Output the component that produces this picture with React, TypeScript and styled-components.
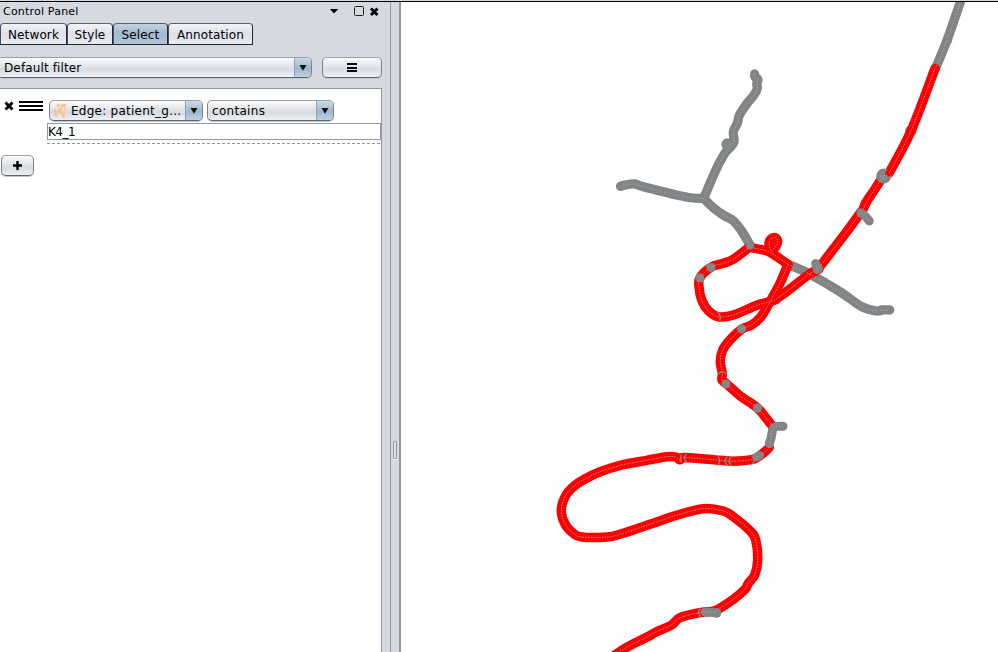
import React from 'react';
import styled, { createGlobalStyle, css } from 'styled-components';

const Global = createGlobalStyle`
  * { box-sizing: border-box; }
  html, body { margin: 0; padding: 0; overflow: hidden; background: #fff; }
  body { font-family: "DejaVu Sans", sans-serif; font-size: 12px; color: #000; }
`;

const Page = styled.div`
  width: 998px;
  height: 652px;
  display: flex;
  flex-direction: column;
  overflow: hidden;
`;
const TopEdge = styled.div`
  height: 2px;
  flex: none;
  background: #d6d9df;
  border-bottom: 1px solid #000;
`;
const Workspace = styled.div`
  flex: 1;
  min-height: 0;
  display: flex;
`;
const Panel = styled.section`
  width: 390px;
  flex: none;
  display: flex;
  flex-direction: column;
  background: #d6d9df;
`;
const TitleBar = styled.header`
  height: 21px;
  flex: none;
  display: flex;
  align-items: center;
  justify-content: space-between;
  padding: 0 11px 3px 3px;
  font-size: 11px;
  letter-spacing: 0.2px;
`;
const WindowIcons = styled.svg`
  display: block;
`;
const Tabs = styled.nav`
  height: 22px;
  flex: none;
  display: flex;
`;
const Tab = styled.button<{ $w: number; $active?: boolean }>`
  width: ${p => p.$w}px;
  height: 22px;
  padding: 1px 0 0;
  border: 1px solid #252638;
  border-top-color: #5d5f6a;
  border-left-color: ${p => (p.$active ? '#3d526b' : '#4a4c5a')};
  border-radius: 4px 4px 0 0;
  background: ${p =>
    p.$active
      ? 'linear-gradient(#c3d2e0, #a3b8cb 50%, #b0c8dc)'
      : 'linear-gradient(#f2f3f5, #dfe1e6 50%, #e9ebef)'};
  font: 12px "DejaVu Sans", sans-serif;
  letter-spacing: 0.13px;
  color: #000;
`;
const nimbus = css`
  border: 1px solid #7d828c;
  border-top-color: #9b9fa8;
  border-bottom-color: #5c6470;
  background: linear-gradient(#fbfbfc, #e4e6ea 40%, #d7dae0 60%, #eef0f4);
  box-shadow: 0 1px 0 #c2c5cb;
`;
const FilterRow = styled.div`
  display: flex;
  height: 21px;
  margin-top: 12px;
  gap: 10px;
`;
const Combo = styled.div<{ $w: number; $flush?: boolean }>`
  ${nimbus}
  width: ${p => p.$w}px;
  height: 21px;
  flex: none;
  display: flex;
  align-items: center;
  overflow: hidden;
  border-radius: ${p => (p.$flush ? '2px 5px 5px 2px' : '5px')};
  border-left-width: ${p => (p.$flush ? 0 : 1)}px;
  padding-left: ${p => (p.$flush ? 4 : 3)}px;
`;
const ComboText = styled.span<{ $gap?: number; $spacing?: number }>`
  flex: 1;
  white-space: nowrap;
  line-height: 20px;
  padding-left: ${p => p.$gap ?? 0}px;
  letter-spacing: ${p => p.$spacing ?? 0.13}px;
`;
const Arrow = styled.span`
  width: 17px;
  height: 21px;
  flex: none;
  display: grid;
  place-items: center;
  border-left: 1px solid #8ba1b6;
  background: linear-gradient(#d0dde9, #9fb8cd 55%, #bed4e7);
`;
const Button = styled.button<{ $w: number }>`
  ${nimbus}
  width: ${p => p.$w}px;
  height: 21px;
  padding: 0;
  border-radius: 5px;
  display: grid;
  place-items: center;
`;
const FilterArea = styled.div`
  width: 382px;
  flex: 1;
  margin-top: 10px;
  border: 1px solid #9297a1;
  border-width: 1px 1px 0 0;
  background: #fff;
`;
const Condition = styled.div`
  display: flex;
  height: 34px;
  padding: 11px 0 0 3px;
`;
const Handles = styled.svg`
  width: 40px;
  height: 16px;
  margin: 0 6px 0 0;
  flex: none;
`;
const Combos = styled.div`
  display: flex;
  gap: 4px;
`;
const Value = styled.div`
  margin-left: 47px;
  height: 17px;
  border: 1px solid #9297a1;
  font-size: 12px;
  line-height: 16px;
  letter-spacing: -0.5px;
`;
const Divider = styled.div`
  margin: 3px 0 11px 47px;
  height: 1px;
  background: repeating-linear-gradient(90deg, #8f949f 0 3px, #fff 3px 5px);
`;
const AddRow = styled.div`
  padding-left: 1px;
`;
const Splitter = styled.div`
  width: 11px;
  flex: none;
  display: flex;
  align-items: flex-start;
  border-left: 1px solid #9297a1;
  border-right: 2px solid #9297a1;
  background: #d6d9df;
`;
const Grip = styled.div`
  width: 4px;
  height: 18px;
  margin: 439px 0 0 2px;
  border: 1px solid #9499a5;
  border-radius: 1px;
  background: #dfe1e6;
  box-shadow: 0 1px 0 #f5f6f8;
`;
const Graph = styled.svg`
  width: 597px;
  height: 650px;
  flex: none;
  display: block;
  background: #fff;
`;

const DownTriangle = () => (
  <svg width="8" height="6" viewBox="0 0 8 6">
    <path d="M.5 0h7L4 5.8z" fill="#111" />
  </svg>
);

const NetworkGlyph = () => (
  <svg width="15" height="16" viewBox="0 0 15 16" fill="#fdc38a" stroke="#fdc38a">
    <path d="M2.5 8 6.5 7.5 10.5 2.5M5.5 2.5l5 0M6.5 7.5l5 3.5M6.5 7.5 10.5 13.5M6.5 7.5l-4.5 4" fill="none" strokeWidth="1.5" />
    <circle cx="6.5" cy="7.5" r="1.8" />
    <circle cx="11" cy="2.3" r="1.5" />
    <circle cx="5" cy="2.5" r="1" />
    <circle cx="2" cy="8" r="1.2" />
    <circle cx="11.7" cy="6" r=".8" />
    <circle cx="10.5" cy="13.3" r="1.2" />
    <circle cx="2.6" cy="12" r="1.1" />
  </svg>
);

// Catmull-Rom interpolation through a list of "x,y" points.
const smooth = (points: string) => {
  const p = points.split(' ').map(s => s.split(',').map(Number));
  const k = 1 / 6;
  let d = `M${p[0][0]} ${p[0][1]}`;
  for (let i = 0; i < p.length - 1; i++) {
    const a = p[Math.max(i - 1, 0)];
    const b = p[i];
    const c = p[i + 1];
    const e = p[Math.min(i + 2, p.length - 1)];
    d += `C${b[0] + (c[0] - a[0]) * k} ${b[1] + (c[1] - a[1]) * k} ${c[0] - (e[0] - b[0]) * k} ${c[1] - (e[1] - b[1]) * k} ${c[0]} ${c[1]}`;
  }
  return d;
};

const greyPaths = [
  '620.5,186.3 626,184.8 635,184 641.7,186.3 660,191 680,195.7 693,198 703.7,198.5',
  '754.7,74 755,77 758,79.3 756.7,84 757.3,88.3 754,95 746.7,104 739.5,115 737.3,123.3 733.3,131.7 734,142 729.3,148.3 726,151.7 720,161.7 711.7,179.3 703.7,198.5',
  '703.7,198.5 713.3,207.7 723.3,215 733.3,220.7 741.7,231 750,245',
  '961,0 947.5,39 935.7,68',
  '788,264.5 808.3,273.3 840,291.7 861.7,306.7 876.7,311 882,310 889.7,310',
].map(smooth);

const redPaths = [
  '749.3,247.3 758,249 770,252.3 788,264.5',
  '788,264.5 780,283.3 770,301.7 761,316.7 751.7,325 742,329 730,340 722.7,350 720.3,361.7 722.3,373.3 722,380 726.7,384 740,395.7 756.7,407.3 765,416.7 773,427',
  '749.3,247.3 733.3,259.3 723.3,263.3 711,267.3 700,277.7 699,286.7 701.7,300 708.3,310.7 718.3,316.7 733.3,315 756.7,305.3 776.7,298.5 808,275 817,269.5 826.7,257.7 846.7,231.7 861,212',
  '770.5,251 769,243.3 771,239 775,237.6 777.7,241 776,246 771,252',
  '863,209.5 867,201 875,189 883.3,176',
  '889,173.3 911,131 935,68.5',
  '769.3,447.3 765,451.7 758.3,456.7 751.7,459.7 733.3,461.2 720,460.3 690,457.8 681.7,457.7 679.7,459.8 676,457 666.7,456.7 646.7,460.3 623.3,464.7 600,471.7 585,479 575,485.3 566,495 561.3,510 565,524 573.3,533.3 581.7,537 606.7,537 620,534.3 650,524.3 676.7,515.3 703.3,508.7 723.3,511 733.3,516.7 750,530.7 755.7,540 757.7,560 754.7,575 748.3,583.3 745,589.3 733.3,599.3 715,610.7 701.7,612.3 680,617.7 671.7,625 656.7,631.7 646.7,637.3 626.7,647.3 612,657',
].map(smooth);

const greyOver = [
  '783,426.3 774,427.5 771,438.3 769.3,443.5',
  '757,457 759.5,455.5',
  '705,612 716,612.5',
  '815.7,263.5 817.5,269.5',
  '861,213 865,216 869.3,221',
].map(smooth);

const joints = [
  [711, 267.6], [700, 278], [741.5, 328.8], [726, 384], [757.5, 408.2],
];

const arcs = [
  'M718 312.5q3 3 2 7.5', 'M706 265.5q5 1 6 4', 'M718.5 373.5q3.5-3 8 0',
  'M718 457q3 3.5 0 8', 'M727 457q-4 4 0 8', 'M731 457q-4 4 0 8', 'M752 456q3 3.5 1 7.5',
  'M686 454.5q-3 4 0 7', 'M681 455v7', 'M700 609q-3 3 0 7', 'M766 445q4-1 6 2',
];

const NetworkView = () => (
  <Graph viewBox="401 2 597 650">
    <g fill="none" strokeLinecap="round" strokeLinejoin="round">
      <g stroke="#848484" strokeWidth="9.3">
        {greyPaths.map(d => <path key={d} d={d} />)}
      </g>
      <g fill="#848484">
        <circle cx="727.5" cy="144.3" r="6" />
        <circle cx="947.5" cy="40" r="4.8" />
        <circle cx="910.8" cy="131" r="5.8" />
        <circle cx="865" cy="204" r="4.8" />
      </g>
      <g stroke="#f00" strokeWidth="9.5">
        {redPaths.map(d => <path key={d} d={d} />)}
        <path d="M770 301.7 776 299.5M808 275 819 269" />
      </g>
      <g stroke="#848484" strokeWidth="9">
        {greyOver.map(d => <path key={d} d={d} />)}
      </g>
      <g fill="#848484">
        <circle cx="883.7" cy="176" r="7.5" />
        <circle cx="818" cy="268.6" r="5" />
        <circle cx="750" cy="245.2" r="4.2" />
        <circle cx="716.5" cy="613" r="4.8" />
        {joints.map(([x, y]) => <circle key={x} cx={x} cy={y} r="4.6" />)}
      </g>
      <path d="M888 173.5 889.5 172" stroke="#f00" strokeWidth="6" />
      <g stroke="#8b8585" strokeWidth="1.4">
        {arcs.map(d => <path key={d} d={d} />)}
      </g>
      <g stroke="#83bfda" strokeWidth="1" strokeDasharray="1 2" strokeLinecap="butt">
        {[...greyPaths, ...greyOver].map(d => <path key={d} d={d} />)}
        <circle cx="727.5" cy="144" r="2.5" />
        <circle cx="883.7" cy="176" r="3.2" />
        <path d="M880 176h8M884 172v8" />
      </g>
      <g stroke="#b98c91" strokeWidth="1" strokeDasharray="1.5 1.2" strokeLinecap="butt">
        {redPaths.map(d => <path key={d} d={d} />)}
      </g>
    </g>
  </Graph>
);

export default function App() {
  return (
    <>
      <Global />
      <Page>
        <TopEdge />
        <Workspace>
          <Panel>
            <TitleBar>
              <span>Control Panel</span>
              <WindowIcons width="50" height="12" viewBox="329 5 50 12">
                <path d="M329.8 9h8.4l-4.2 4.6z" />
                <rect x="354.5" y="6.5" width="9" height="9" rx="1" fill="none" stroke="#222" />
                <path d="m371 8.5 6.5 6.5m0-6.5-6.5 6.5" stroke="#000" strokeWidth="2.9" />
              </WindowIcons>
            </TitleBar>
            <Tabs>
              <Tab $w={67}>Network</Tab>
              <Tab $w={46}>Style</Tab>
              <Tab $w={55} $active>Select</Tab>
              <Tab $w={85}>Annotation</Tab>
            </Tabs>
            <FilterRow>
              <Combo $w={312} $flush>
                <ComboText>Default filter</ComboText>
                <Arrow><DownTriangle /></Arrow>
              </Combo>
              <Button $w={60} aria-label="Filter options">
                <svg width="10" height="9" viewBox="0 0 10 9" shapeRendering="crispEdges">
                  <path d="M0 0h10v2H0zM0 4h10v1.5H0zM0 7h10v2H0z" />
                </svg>
              </Button>
            </FilterRow>
            <FilterArea>
              <Condition>
                <Handles viewBox="3 100 40 16">
                  <path d="m5.5 102.5 7 7m0-7-7 7" stroke="#000" strokeWidth="2.9" />
                  <path d="M19 101h24v2H19zM19 105h24v2H19zM19 109h24v2H19z" shapeRendering="crispEdges" />
                </Handles>
                <Combos>
                  <Combo $w={154}>
                    <NetworkGlyph />
                    <ComboText $gap={3} $spacing={0.25}>Edge: patient_g...</ComboText>
                    <Arrow><DownTriangle /></Arrow>
                  </Combo>
                  <Combo $w={127}>
                    <ComboText $gap={1} $spacing={0.3}>contains</ComboText>
                    <Arrow><DownTriangle /></Arrow>
                  </Combo>
                </Combos>
              </Condition>
              <Value>K4_1</Value>
              <Divider />
              <AddRow>
                <Button $w={33} aria-label="Add condition">
                  <svg width="9" height="9" viewBox="0 0 9 9">
                    <path d="M0 4.5h9M4.5 0v9" stroke="#000" strokeWidth="2.4" />
                  </svg>
                </Button>
              </AddRow>
            </FilterArea>
          </Panel>
          <Splitter><Grip /></Splitter>
          <NetworkView />
        </Workspace>
      </Page>
    </>
  );
}
